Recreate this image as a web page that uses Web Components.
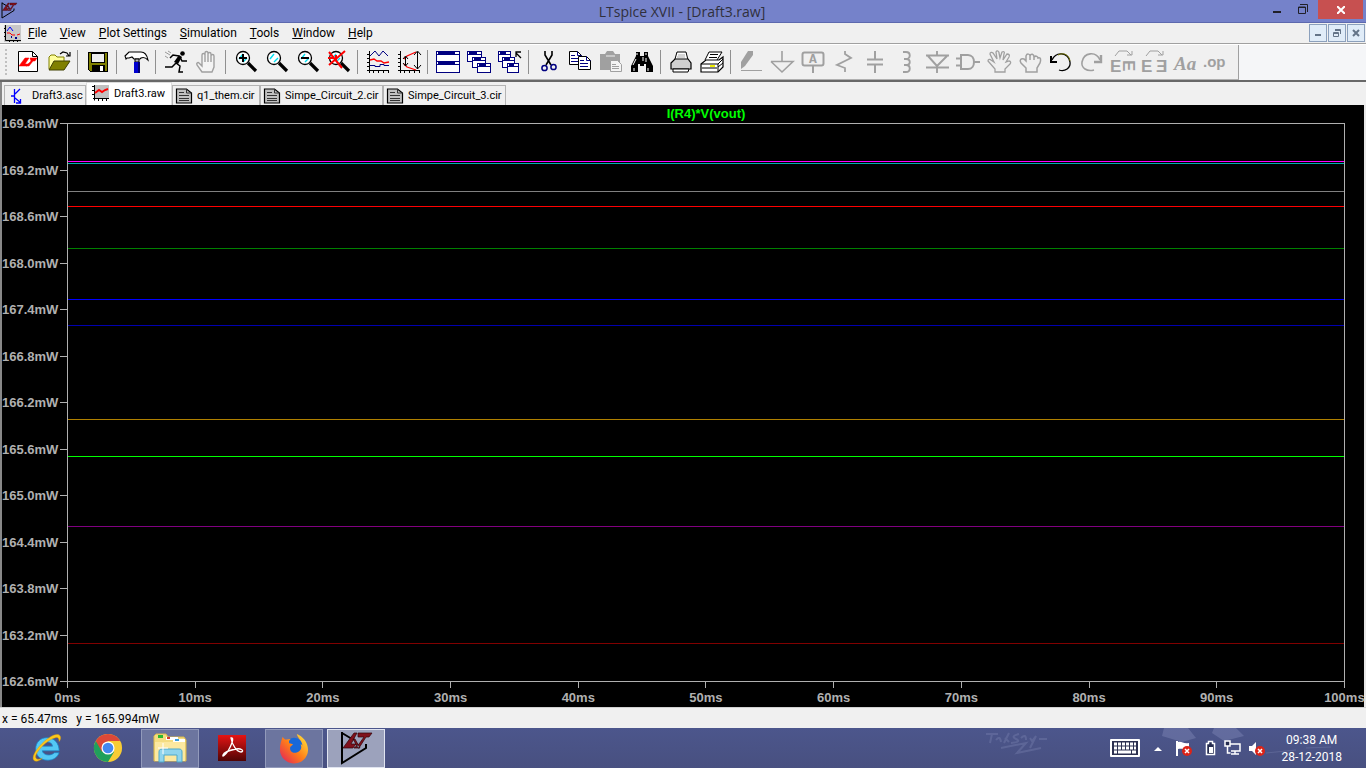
<!DOCTYPE html>
<html lang="en">
<head>
<meta charset="utf-8">
<title>LTspice XVII - [Draft3.raw]</title>
<style>
html,body{margin:0;height:100%}
body{font-family:Roboto,"Noto Sans",sans-serif;font-size:12px;color:#000;background:#f0f0f0}
</style>
</head>
<body>
<lt-desktop></lt-desktop>
<script>
const define = (name, html, setup) => {
  const template = document.createElement('template');
  template.innerHTML = '<style>*{box-sizing:border-box}button{font:inherit;color:inherit;border:0;padding:0;margin:0;background:none}</style>' + html;
  customElements.define(name, class extends HTMLElement {
    constructor() {
      super();
      this.attachShadow({mode: 'open'}).appendChild(template.content.cloneNode(true));
    }
    connectedCallback() { if (setup) setup(this, this.shadowRoot); }
  });
};

const lens = '<circle cx="9" cy="8" r="6.500" fill="#fff" stroke="#000" stroke-width="1.300"/><path d="M14 13l8 8" stroke="#000" stroke-width="3.200"/><path d="M5 9l4-5M9 12l4-4" stroke="#00e0f0" stroke-width="1.400"/>';
const axes = '<g shape-rendering="crispEdges" fill="none" stroke="#000"><path d="M3.500 1v22M1 20.500h22M1 4.500h3M1 8.500h3M1 12.500h3M1 16.500h3M7.500 20v3M12.500 20v3M17.500 20v3M22.500 20v3"/></g>';
const win = (x, y, w, h) => `<g shape-rendering="crispEdges"><rect x="${x}" y="${y}" width="${w}" height="${h}" fill="#000080"/><rect x="${x+1}" y="${y+4}" width="${w-2}" height="${h-5}" fill="#fff"/><path d="M${x+1} ${y+1}h1v2h-1zM${x+w-5} ${y+1}h4v2h-4z" fill="#fff"/></g>`;
const doc = (x, y) => `<path d="M${x+.5} ${y+.5}h8l4 4v9h-12z" fill="#fff" stroke="#000"/><path d="M${x+8.5} ${y+.5}v4h4" fill="none" stroke="#000080"/><path d="M${x+2} ${y+4.5}h4m-4 3h8m-8 3h8" stroke="#000080"/>`;
const G = '#a0a0a0';
const badge = '<circle cx="12" cy="11" r="5" fill="#dc2418"/><path d="M10 9l4 4m0-4l-4 4" stroke="#fff" stroke-width="1.500"/>';
const ICONS = {
  app: ['0 0 32 34', '<path d="M2 1v31L26 17v-4M2 2l10 6" fill="none" stroke="#000" stroke-width="2"/><path d="M14 2L3 17h10l3-4h-5l6-11zM18 2h14l-3 4h-3l-7 11h-5l5-4 5-7h-6zM13 8l5 9h2l-5-9z" fill="#80101c" stroke="#300408" stroke-width=".700"/>'],
  child: ['0 0 17 17', '<path fill="#c8c8c8" d="M0 0h17v17H0z"/><path d="M1.500 0v15.500H17M0 3.500h2M0 7.500h2M0 11.500h2M5.500 15v2M9.500 15v2M13.500 15v2" stroke="#000" fill="none"/><path d="M3 6l3-4 3 4" stroke="#00f" fill="none"/><path d="M3 8h3l2 2h3m2 0l3-1" stroke="#f00" fill="none"/><path d="M7 12h1m3 1h2" stroke="#008" stroke-width="2"/>'],
  new: ['0 0 24 24', '<path d="M2.500 1.500h14l5 5v15h-19z" fill="#fff" stroke="#000"/><path d="M16.500 1.500v5h5" fill="none" stroke="#000"/><path d="M3 16l6-8h4l-4 6h4l-2 2zM14 8h7l-2 3h-2l-4 5h-3l5-5z" fill="#f00" stroke="#f00" stroke-width=".500"/>'],
  open: ['0 0 24 24', '<path d="M2 19V7l2-2h4l2 2h7v4" fill="#ffff9c" stroke="#808000"/><path d="M2 20l5-9h16l-6 9z" fill="#808000" stroke="#404000"/><path d="M13 4l3-2 4 1 2 3m-3 0h4V2" fill="none" stroke="#000" stroke-width="1.200"/>'],
  save: ['0 0 24 24', '<g shape-rendering="crispEdges"><path d="M2 2h20v20H4l-2-2z" fill="#000"/><path d="M3 3h18v18H4l-1-1z" fill="#808000"/><path d="M5 3h13v9H5z" fill="#eee" stroke="#000"/><path d="M6 15h13v6H6z" fill="#000"/><path d="M14 16h3v5h-3z" fill="#fff"/></g>'],
  hammer: ['0 0 24 24', '<path d="M0 6l4-4h12c4 0 6 3 7 8-3-3-5-3-7-2l-1 1H9L7 7 4 8H2L1 9z" fill="#fff" stroke="#000" stroke-width="1.100"/><path d="M10 9h4v3h-4z" fill="#bbb" stroke="#000"/><path d="M9 12h6v3h-2v8h-4v-8H9z" fill="#0000d0"/><path d="M13 12h2v11h-2z" fill="#000070"/>'],
  run: ['0 0 24 24', '<circle cx="18.500" cy="3.500" r="2.300"/><path d="M15 6L9 5 6 8M16 7l2 4h5M12 13l4 3-1 6h4M12 13l-4 4H1" stroke="#000" stroke-width="1.500" fill="none"/><path d="M15 5l-5 7 4 2 4-7z"/><path d="M1 2l5 3M4 1l3 2M1 6l3 2" stroke="#999"/>'],
  hand: ['0 0 24 24', `<path d="M7 22l-5-7c-1-2 1-3 2-2l3 3V5c0-2 3-2 3 0v7V3c0-2 3-2 3 0v9V4c0-2 3-2 3 0v8V6c0-2 3-2 3 0v11l-2 5z" fill="#f4f4f4" stroke="${G}" stroke-width="1.400"/>`],
  zin: ['0 0 24 24', lens + '<path d="M9 4v8M5 8h8" stroke="#000" stroke-width="2"/>'],
  zoom: ['0 0 24 24', lens],
  zout: ['0 0 24 24', lens + '<path d="M5 8h8" stroke="#000" stroke-width="2"/>'],
  zfit: ['0 0 24 24', lens + '<path d="M2 2l13 16M18 1L2 15M1 8h6M9 5v6" stroke="#f00" stroke-width="2"/>'],
  plot: ['0 0 24 24', axes + '<path d="M4 6l5-5 4 5 4-5 5 5" fill="none" stroke="#000080"/><path d="M4 10l4-1 3 2h4l3 2 5-1" fill="none" stroke="#f00" stroke-width="1.400"/><path d="M4 15.500h5v1h5v-2h4v1h5" fill="none" stroke="#000080"/>'],
  fit: ['0 0 24 24', axes + '<path d="M19 2l-9 4-3 3m0 5l3 3 9 3" stroke="#f00" fill="none" stroke-width="1.300"/><path d="M8.500 7v9M6 9l2.500-3L11 9m-5 4l2.500 3 2.500-3M20.500 2v17M17 5l3.500-4L24 5m-7 10l3.500 4 3.500-4" fill="none" stroke="#000"/>'],
  tile: ['0 0 24 24', win(0,1,24,11) + win(0,11,24,12)],
  cascade: ['0 0 24 24', win(0,1,15,11) + win(5,7,14,11) + win(10,13,14,10)],
  close: ['0 0 24 24', win(0,1,13,11) + win(4,7,13,11) + win(9,13,12,10) + '<path d="M23 8l-5-5m0 4V2h5" stroke="#000" fill="none" stroke-width="1.300"/>'],
  cut: ['0 0 24 24', '<path d="M8 1v4l6 10M15 1v4l-6 10" fill="none" stroke="#000" stroke-width="1.600"/><circle cx="7.500" cy="18" r="2.600" fill="none" stroke="#000080" stroke-width="1.500"/><circle cx="16.500" cy="17" r="2.600" fill="none" stroke="#000080" stroke-width="1.500"/>'],
  copy: ['0 0 24 24', doc(1,1) + doc(10,6)],
  paste: ['0 0 24 24', `<path d="M1 4h5l2-3h6l2 3h5v16H1z" fill="${G}"/><path d="M7 6h9" stroke="#eee"/><path d="M11.500 10.500h7l4 4v7h-11z" fill="#f4f4f4" stroke="${G}"/><path d="M13 14.500h4m-4 2h7m-7 2h7" stroke="${G}"/>`],
  find: ['0 0 24 24', '<path d="M6 2h4v4h4V2h4v4l5 10v6h-7v-8h-2v2h-4v-2H8v8H1v-6L6 6z"/><path d="M7 3v2m9-2v2M6 9l-3 6m10-8v4m3-3v4M4 18v3m14-3v3" stroke="#fff"/>'],
  print: ['0 0 24 24', '<path d="M6 9l2-7h9l2 8" fill="#fff" stroke="#000"/><path d="M2 13l4-4h13l3 4v6H2z" fill="#d0d0d0" stroke="#000" stroke-width="1.200"/><path d="M4 19h16l-1 3H4z" fill="#fff" stroke="#000"/><path d="M9 5h7m-8 2h8" stroke="#aaa"/>'],
  setup: ['0 0 24 24', '<path d="M5 10L9 2h13l-5 8" fill="#fff" stroke="#000"/><path d="M10 4.500h8m-9 3h8" stroke="#000"/><path d="M1 14l5-4h13l4-3v10l-5 5H1z" fill="#fff" stroke="#000" stroke-width="1.200"/><path d="M1 14h17v8m0-8l5-5M2 18h15m1-1l5-4" stroke="#000" fill="none"/><path d="M10 16h5" stroke="#ee0" stroke-width="2"/>'],
  pen: ['0 0 24 24', `<path d="M2 19v-7l7-11h5v4L6 16z" fill="${G}"/><path d="M2 20.500h21" stroke="${G}"/>`],
  gnd: ['0 0 24 24', `<path d="M12 1v11M1 11.500h22L12 22 1 11.500" fill="none" stroke="${G}" stroke-width="1.600"/>`],
  label: ['0 0 24 24', `<rect x="1.500" y="2.500" width="21" height="13" rx="2" fill="none" stroke="${G}" stroke-width="2"/><path d="M12 16v7" stroke="${G}" stroke-width="2"/><text x="12" y="13" text-anchor="middle" font-family="Liberation Mono,monospace" font-size="13" font-weight="700" fill="${G}">A</text>`],
  res: ['0 0 24 24', `<path d="M13 1v3l6 4-14 7 8 3v4" fill="none" stroke="${G}" stroke-width="1.800"/>`],
  cap: ['0 0 24 24', `<path d="M12 1v8M12 15v8M4 9.500h16M4 14.500h16" fill="none" stroke="${G}" stroke-width="2"/>`],
  ind: ['0 0 24 24', `<path d="M9 2h3c5 0 5 7 0 7h-2 2c5 0 5 6 0 6h-2 2c5 0 5 7 0 7H9" fill="none" stroke="${G}" stroke-width="1.900"/>`],
  diode: ['0 0 24 24', `<path d="M12 1v5M12 17v6M1 5.500h23M3 6l9 10 10-10M1 17.500h23" fill="none" stroke="${G}" stroke-width="1.900"/>`],
  gate: ['0 0 24 24', `<path d="M5 5h7c8 0 8 14 0 14H5zM0 8.500h5M0 15.500h5M18 12h6" fill="none" stroke="${G}" stroke-width="2"/>`],
  move: ['0 0 24 24', `<path d="M8 22v-3l-7-8c0-2 2-2 3-1l3 2-4-8c0-2 2-2 3-1l4 6-1-7c1-2 3-1 3 1l1 5 2-6c2-1 3 0 2 2l-1 6 4-6c2 0 3 1 2 3l-3 5 3-1c2 0 2 2 1 3l-5 5v3z" fill="none" stroke="${G}" stroke-width="1.300"/>`],
  drag: ['0 0 24 24', `<path d="M8 22v-4l-5-5c-2-3 0-5 3-4l2 2V6c1-3 4-2 4 0 1-3 4-2 4 1 2-2 4 0 4 1 3-1 3 2 2 5l-3 5v4zM12 6v4M16 7v3" fill="none" stroke="${G}" stroke-width="1.500"/>`],
  undo: ['0 0 24 24', '<path d="M3 10c4-9 16-8 18 2 1 6-5 10-11 8" fill="none" stroke="#000" stroke-width="1.300"/><path d="M9 5c6-3 11 0 12 6" fill="none" stroke="#707000"/><path d="M2 6v6h6" fill="none" stroke="#000" stroke-width="2"/>'],
  redo: ['0 0 24 24', `<path d="M20 10c-4-9-16-8-18 2-1 6 5 10 12 8" fill="none" stroke="${G}" stroke-width="1.600"/><path d="M21 5v7h-7" fill="none" stroke="${G}" stroke-width="2.400"/>`],
  rot: ['0 0 24 24', `<path d="M4 6l4-5h8l4 4m-4 0h5V1" fill="none" stroke="${G}"/><g font-family="Liberation Sans,sans-serif" font-weight="700" font-size="17" fill="${G}"><text x="-1" y="22">E</text><text x="0" y="0" transform="translate(12 10) rotate(90)">E</text></g>`],
  mir: ['0 0 24 24', `<path d="M4 6l4-5h8l4 4m-4 0h5V1" fill="none" stroke="${G}"/><g font-family="Liberation Sans,sans-serif" font-weight="700" font-size="17" fill="${G}"><text x="-1" y="22">E</text><text x="14" y="22">Ǝ</text></g>`],
  text: ['0 0 24 24', `<text x="1" y="20" font-family="Liberation Serif,serif" font-style="italic" font-weight="700" font-size="19" fill="${G}">Aa</text>`],
  op: ['0 0 24 24', `<text x="-1" y="17" font-family="Liberation Sans,sans-serif" font-weight="700" font-size="15" fill="${G}">.op</text>`],
  asc: ['0 0 18 16', '<path d="M4.500 1v14M1 8h3M5 6l5-5M5 10l6 5M10.500 11v4H6" fill="none" stroke="#00f" stroke-width="1.300"/>'],
  raw: ['0 0 18 16', '<path fill="#c0c0c0" d="M2 0h15v13H2z"/><path d="M2.500 0v15.500M0 1.500h3M0 5.500h3M0 9.500h3M1 13.500h16M6.500 13v3M10.500 13v3M14.500 13v3" fill="none" stroke="#000"/><path d="M3 8l4-3 3 2 3-2 3-1" fill="none" stroke="#f00" stroke-width="1.900"/>'],
  cir: ['0 0 18 16', '<path d="M.5 1h10l5 4v10H.5z" fill="#c0c0c0" stroke="#000" stroke-width="1.200"/><path d="M10.500 1v4h5M3 4.500h5M3 7.500h10M3 10.500h10M3 12.500h10" fill="none" stroke="#333"/>'],
  ie: ['0 0 32 32', '<path d="M25 21h5c-2 5-6 8-12 8C9 29 5 23 5 17 5 10 10 5 17 5c8 0 13 6 13 14H12c1 5 9 6 13 2zM12 14h11c-1-6-10-6-11 0z" fill="#54c8f4" stroke="#1888cc" stroke-width=".8"/><path d="M3 29C-2 22 22-2 30 2c3 2 1 6 0 7 0-3-1-5-4-4C17 7 4 21 5 26c1 3 5 2 7 1-3 3-7 4-9 2z" fill="#fcc81c" stroke="#d89808" stroke-width=".5"/>'],
  chrome: ['0 0 32 32', '<circle cx="16" cy="16" r="15" fill="#f8cc34"/><path d="M16 16L3 8.500A15 15 0 0 0 16 31l6.500-11z" fill="#20a05c"/><path d="M3 8.500A15 15 0 0 1 29 8.500H16L9.500 20z" fill="#dc4838"/><circle cx="16" cy="16" r="7" fill="#fff"/><circle cx="16" cy="16" r="5.700" fill="#4488f0"/>'],
  folder: ['0 0 34 32', '<path d="M1 4l2-2h10l2 3h16l2 3v21H1z" fill="#f4dc80" stroke="#d8b84c"/><path d="M5 3h5v3H5z" fill="#2cb830"/><path d="M13 5h12v3H13z" fill="#fff"/><path d="M14 5h3v2h-3z" fill="#d8382c"/><path d="M20 7h12v3H20z" fill="#fff"/><path d="M22 7h4v2h-4z" fill="#389ce0"/><path d="M2 10h30v19H2z" fill="#fce8a0"/><path d="M6 30V20c0-2 1-3 3-3h17c2 0 3 1 3 3v10h-5v-7H11v7z" fill="#90d4ec" stroke="#4ca8cc"/><path d="M10 11v11M5 16h10" stroke="#fff"/>'],
  pdf: ['0 0 28 26', '<defs><linearGradient id="r" x2="0" y2="1"><stop stop-color="#e41414"/><stop offset="1" stop-color="#500404"/></linearGradient></defs><path d="M0 0h28v26H0z" fill="url(#r)"/><path d="M13 3c4-1 0 8-3 13-3 4-6 7-5 4s8-5 13-6 9 2 5 3c-4 0-9-7-10-14z" fill="none" stroke="#fff" stroke-width="1.300"/>'],
  firefox: ['0 0 32 32', '<defs><linearGradient id="f" x1="1" x2="0" y2="1"><stop stop-color="#fff040"/><stop offset=".5" stop-color="#ff8018"/><stop offset="1" stop-color="#e01860"/></linearGradient></defs><circle cx="16" cy="15" r="10" fill="#1868d8"/><path d="M4 4c1 2 2 3 4 3l5-1c-2 1-3 3-2 5l4 1-3 3c-1 4 2 7 6 6 5-1 7-5 5-9 1 0 2 1 2 2 0-6-5-8-6-13 6 2 12 9 12 17a15 15 0 0 1-30-1C1 13 2 9 4 4z" fill="url(#f)"/>'],
  kbd: ['0 0 30 18', '<rect width="30" height="18" rx="1" fill="#fff"/><rect x="2" y="2" width="26" height="14" fill="#2c3050"/><path d="M4 5h22M4 9h22" stroke="#fff" stroke-width="3" stroke-dasharray="3 1"/><path d="M4 13h3m1 0h13m1 0h4" stroke="#fff" stroke-width="3"/>'],
  up: ['0 0 8 5', '<path d="M0 5l4-4 4 4z" fill="#fff"/>'],
  flag: ['0 0 18 17', '<path d="M2 1v15" stroke="#fff" stroke-width="2"/><path d="M3 2c4-1 5 2 11 1v6c-5 1-7-1-11 0z" fill="#fff"/>' + badge],
  battery: ['0 0 12 16', '<path d="M3.500 1.500h4v2h2v11h-8v-11h2z" fill="#252c50" stroke="#fff" stroke-width="1.500"/><path d="M4 7h4v6H4z" fill="#fff"/>'],
  net: ['0 0 18 16', '<path d="M5 4h11v7H7M11 11v3M7 14h8M3.500 6v7h3" fill="none" stroke="#fff" stroke-width="1.500"/><path d="M1 1h5v5H1z" fill="#252c50" stroke="#fff" stroke-width="1.500"/>'],
  sound: ['0 0 18 17', '<path d="M1 6h3l4-4v13l-4-4H1z" fill="#fff"/>' + badge]
};

define('lt-icon', `<style>:host{display:block;flex:none}svg{display:block;width:100%;height:100%;overflow:visible}</style><div></div>`, (el, root) => {
  const [box, art] = ICONS[el.getAttribute('name')];
  const [w, h] = (el.getAttribute('size') || '24 24').split(' ');
  const div = root.querySelector('div');
  div.style.cssText = `width:${w}px;height:${h}px`;
  div.innerHTML = `<svg viewBox="${box}" aria-hidden="true" fill="#000">${art}</svg>`;
});

define('title-bar', `<style>
:host{display:flex;flex:none;height:23px;background:#7582ca;border-bottom:1px solid #5d69ae;color:#30303c;padding:0 3px 0 1px}
.side{flex:1;display:flex}.side.r{justify-content:flex-end}
.side lt-icon{padding-top:2px}
h1{margin:0;font:400 14px/23px "Open Sans","Noto Sans",sans-serif;white-space:nowrap}
button{width:26px;height:18px;display:grid;place-items:center}
.x{width:45px;height:19px;background:#c75050;margin-left:2px}
svg{display:block}
</style><div class="side"><lt-icon name="app" size="16 17"></lt-icon></div><h1>LTspice XVII - [Draft3.raw]</h1>
<div class="side r"><button aria-label="Minimize"><svg width="8" height="10"><path d="M0 7h8v2H0z" fill="#202028"/></svg></button>
<button aria-label="Restore"><svg width="10" height="10" fill="none" stroke="#202028"><path d="M.5 3h7v6.500h-7zM.5 3.500h7M2 .5h7.500V8"/></svg></button>
<button class="x" aria-label="Close"><svg width="8" height="8"><path d="M0 0l8 8M8 0L0 8" stroke="#fff" stroke-width="2"/></svg></button></div>`);

define('menu-item', `<style>:host{display:block}button{height:20px;line-height:20px;white-space:nowrap}</style><button><slot></slot></button>`);
define('menu-bar', `<style>
:host{display:flex;flex:none;height:21px;align-items:center;border-bottom:1px solid #a0a0a0;padding:0 1px 0 4px}
nav{display:flex;flex:1;gap:13px;margin-left:7px}
.c{display:flex;gap:1px}
.c button{width:18px;height:18px;border:1px solid #8ba0bc;background:#e0ecf8;display:grid;place-items:center}
svg{display:block}
</style><lt-icon name="child" size="17 17"></lt-icon>
<nav><menu-item><u>F</u>ile</menu-item><menu-item><u>V</u>iew</menu-item><menu-item><u>P</u>lot Settings</menu-item><menu-item><u>S</u>imulation</menu-item><menu-item><u>T</u>ools</menu-item><menu-item><u>W</u>indow</menu-item><menu-item><u>H</u>elp</menu-item></nav>
<div class="c"><button aria-label="Minimize plot"><svg width="8" height="8"><path d="M1 5h6v2H1z" fill="#647488"/></svg></button>
<button aria-label="Restore plot"><svg width="8" height="8" fill="none" stroke="#647488"><path d="M.5 3.500h5v4h-5zM2 .500h5.500V5M2 1.500h5M0 4.500h5"/></svg></button>
<button aria-label="Close plot"><svg width="8" height="8"><path d="M1 1l6 6M7 1L1 7" stroke="#647488" stroke-width="2"/></svg></button></div>`);

define('tool-button', `<style>:host{display:block;flex:none}button{width:31px;height:35px;display:grid;place-items:center}</style><button></button>`, (el, root) => {
  const button = root.querySelector('button');
  button.setAttribute('aria-label', el.getAttribute('label'));
  button.innerHTML = `<lt-icon name="${el.getAttribute('icon')}"></lt-icon>`;
});
const TOOLS = [['new','New'],['open','Open'],0,['save','Save'],0,['hammer','Control panel'],0,['run','Run'],['hand','Halt'],0,['zin','Zoom in'],['zoom','Zoom area'],['zout','Zoom out'],['zfit','Zoom full extents'],0,['plot','Pick visible traces'],['fit','Autorange'],0,['tile','Tile windows'],['cascade','Cascade windows'],['close','Close windows'],0,['cut','Cut'],['copy','Copy'],['paste','Paste'],['find','Find'],0,['print','Print'],['setup','Print setup'],0,['pen','Wire'],['gnd','Ground'],['label','Label net'],['res','Resistor'],['cap','Capacitor'],['ind','Inductor'],['diode','Diode'],['gate','Component'],['move','Move'],['drag','Drag'],['undo','Undo'],['redo','Redo'],['rot','Rotate'],['mir','Mirror'],['text','Text'],['op','SPICE directive']];
const toolItems = TOOLS.map(t => t ? `<tool-button icon="${t[0]}" label="${t[1]}"></tool-button>` : '<i></i>').join('');
define('tool-bar', `<style>
:host{display:flex;flex:none;height:38px;background:#f5f6f8;border-top:1px solid #fff;border-bottom:2px solid #686868}
div{display:flex;align-items:center;background:#f0f0f0;border-right:1px solid #a0a0a0;padding-right:7px;border-bottom:1px solid #b0b0b0}
i{flex:none;width:8px;height:24px;border-left:1px solid #909090;margin-left:3px;margin-right:-3px}
b{width:2px;height:26px;margin:0 5px;background:repeating-linear-gradient(#c0c0c0 0 2px,#f0f0f0 2px 4px)}
</style><div role="toolbar" aria-label="Main"><b></b>${toolItems}</div>`);

define('file-tab', `<style>:host{display:block}
button{height:20px;width:100%;display:flex;align-items:center;gap:4px;padding:0 0 0 5px;border:1px solid #b4b4b4;border-width:1px 1px 0 1px;font-size:11px;white-space:nowrap}
:host([icon=cir]) button{gap:3px;padding-left:3px}
:host([active]) button{height:23px;background:#fff;border-color:#dcdcdc;padding-bottom:2px}
</style><button role="tab"><span class="i"></span><slot></slot></button>`, (el, root) => {
  root.querySelector('.i').innerHTML = `<lt-icon name="${el.getAttribute('icon')}" size="18 16"></lt-icon>`;
  root.querySelector('button').setAttribute('aria-selected', el.hasAttribute('active'));
});
define('tab-strip', `<style>:host{display:flex;flex:none;height:23px;align-items:flex-end;border-left:2px solid #888;padding-left:2px}
.s{width:82px}.m{width:86px}.n{width:88px}.l{width:123px}</style>
<file-tab class="s" icon="asc">Draft3.asc</file-tab><file-tab class="m" icon="raw" active>Draft3.raw</file-tab><file-tab class="n" icon="cir">q1_them.cir</file-tab><file-tab class="l" icon="cir">Simpe_Circuit_2.cir</file-tab><file-tab class="l" icon="cir">Simpe_Circuit_3.cir</file-tab>`);

define('wave-plot', `<style>
:host{flex:1;min-height:0;display:grid;grid-template:18px 1fr 25px / 65px 1fr 19px;background:#000;color:#b0b0b0;border-left:2px solid #888;border-right:2px solid #e8e8e8;font:700 13px/14px "Liberation Sans",sans-serif}
h2{grid-area:1/2/2/3;margin:0;font:inherit;line-height:18px;color:#0f0;text-align:center}
.y{grid-area:2/1/3/2;display:flex;flex-direction:column;justify-content:space-between;margin:-6px 0 -7px}
.y span{height:14px;display:flex;align-items:center;justify-content:space-between}
.y span::after{content:"";width:7px;height:1px;background:#b0b0b0;margin-bottom:1px}
svg{grid-area:2/2/3/3;width:100%;height:100%;display:block;border:1px solid #b0b0b0}
.x{grid-area:3/2/4/3;display:flex;justify-content:space-between}
.x span{width:1px;display:flex;flex-direction:column;align-items:center;white-space:nowrap}
.x span::before{content:"";flex:none;width:1px;height:6px;background:#b0b0b0;margin-bottom:3px}
</style><h2>I(R4)*V(vout)</h2><div class="y"></div><svg shape-rendering="crispEdges"></svg><div class="x"></div>`, (el, root) => {
  const top = 169.8, span = 7.2;
  const traces = [[169.310,'#ff00ff'],[169.284,'#00b0b0'],[168.923,'#808080'],[168.729,'#ff0000'],[168.187,'#008000'],[167.529,'#0000ff'],[167.194,'#0000b0'],[165.981,'#b08000'],[165.503,'#00ff00'],[164.600,'#800080'],[163.090,'#800000']];
  root.querySelector('.y').innerHTML = Array.from({length: 13}, (_, i) => `<span>${(top - i * .6).toFixed(1)}mW</span>`).join('');
  root.querySelector('.x').innerHTML = Array.from({length: 11}, (_, i) => `<span>${i * 10}ms</span>`).join('');
  root.querySelector('svg').innerHTML = traces.map(([v, c]) => {
    const y = ((top - v) / span * 100).toFixed(2) + '%';
    return `<line x1="0" x2="100%" y1="${y}" y2="${y}" stroke="${c}"/>`;
  }).join('');
});

define('status-bar', `<style>:host{display:flex;flex:none;height:21px;line-height:20px;padding:1px 2px 0;gap:9px;border-top:1px solid #d0d0d0}</style><span>x = 65.47ms</span><span>y = 165.994mW</span>`);

define('task-button', `<style>:host{display:block;flex:none}
button{width:58px;height:39px;display:grid;place-items:center;border:1px solid transparent}
:host([open]) button{background:#6c759f;border-color:#929abb}
:host([current]) button{background:#9ca2bc;border:1px solid #e0e4f0}
</style><button><slot></slot></button>`, (el, root) => root.querySelector('button').setAttribute('aria-label', el.getAttribute('label')));
define('task-bar', `<style>
:host{position:relative;display:flex;flex:none;height:40px;align-items:center;background:linear-gradient(#4c568c,#485080);color:#fff;padding:0 24px 0 17px}
.apps{display:flex;gap:4px;flex:1}
.tray{position:relative;display:flex;align-items:center}
.wash{position:absolute;right:0;top:0;width:420px;height:40px}
.kbd{margin-right:14px}.up{margin-right:13px}.flag{margin-right:12px}.bat{margin-right:7px}.net{margin-right:6px}.snd{margin-right:15px}
time{line-height:17px;text-align:center;padding-top:2px}
</style>
<svg class="wash" viewBox="0 0 420 40" aria-hidden="true" fill="none" stroke="#8890bc" opacity=".3"><path d="M40 6h12m-6 0l-2 9m6-3q4-5 5 2m3 1l5-10m-4 5l4 4m10-8q-9 2-3 5t-5 4m10-5q5-5 5 2m4-2l2 3 4-5-6 12m9-9h8M55 20l25-5-9 10 24-5" stroke-width="2"/><path d="M218 0h24l8 10-14 4-20-6zM268 0h22l8 8-20 5-12-8z" fill="#98a0cc" stroke="none"/><path d="M320 25l30-3m10-2l25-1"/></svg>
<div class="apps"><task-button label="Internet Explorer"><lt-icon name="ie" size="30 30"></lt-icon></task-button><task-button label="Chrome"><lt-icon name="chrome" size="30 30"></lt-icon></task-button><task-button label="File Explorer" open><lt-icon name="folder" size="34 32"></lt-icon></task-button><task-button label="Adobe Reader"><lt-icon name="pdf" size="28 26"></lt-icon></task-button><task-button label="Firefox" open><lt-icon name="firefox" size="30 30"></lt-icon></task-button><task-button label="LTspice" current><lt-icon name="app" size="32 34"></lt-icon></task-button></div>
<div class="tray"><lt-icon class="kbd" name="kbd" size="30 18"></lt-icon><lt-icon class="up" name="up" size="8 5"></lt-icon><lt-icon class="flag" name="flag" size="18 17"></lt-icon><lt-icon class="bat" name="battery" size="12 16"></lt-icon><lt-icon class="net" name="net" size="18 16"></lt-icon><lt-icon class="snd" name="sound" size="18 17"></lt-icon><time datetime="2018-12-28T09:38">09:38 AM<br>28-12-2018</time></div>`);

define('lt-desktop', `<style>:host{display:flex;flex-direction:column;min-height:100vh}</style>
<title-bar></title-bar><menu-bar></menu-bar><tool-bar></tool-bar><tab-strip></tab-strip><wave-plot></wave-plot><status-bar></status-bar><task-bar></task-bar>`);
</script>
</body>
</html>
